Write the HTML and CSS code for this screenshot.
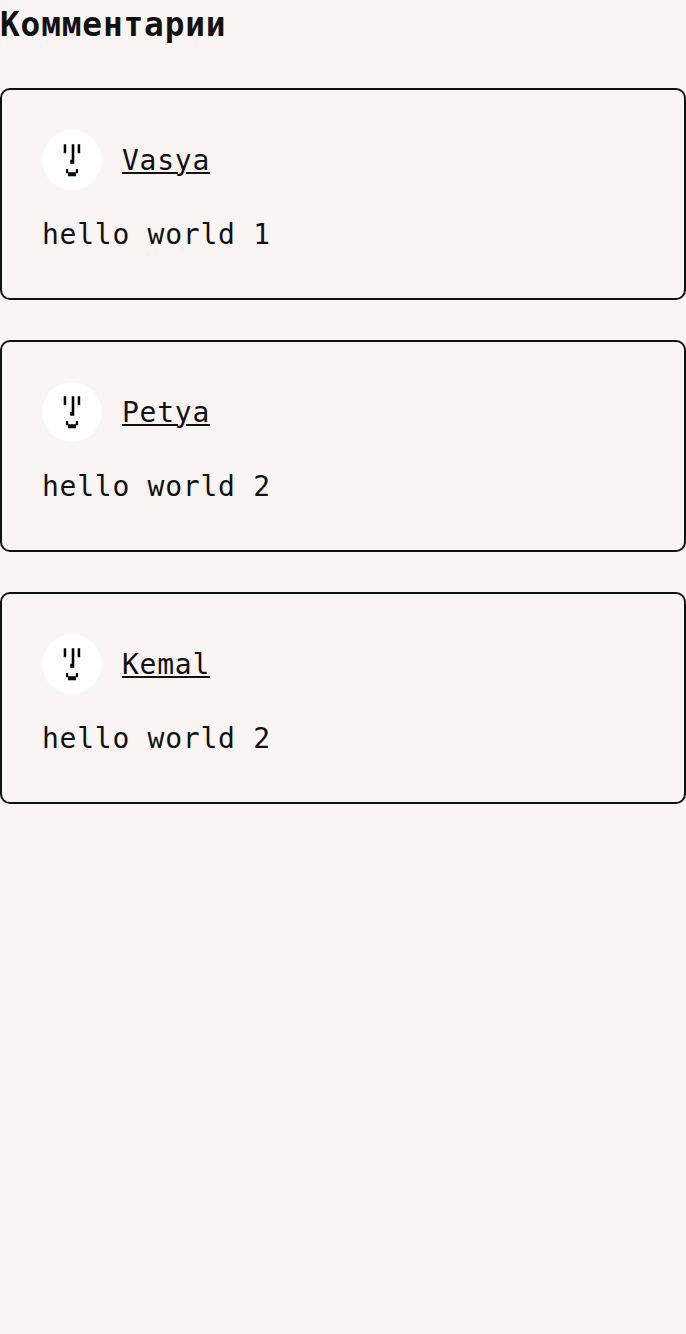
FILE: index.html
```html
<!DOCTYPE html>
<html lang="ru">
<head>
<meta charset="utf-8">
<title>Комментарии</title>
<link rel="stylesheet" href="styles.css">
</head>
<body>
<svg class="sprite" aria-hidden="true">
  <symbol id="face" viewBox="0 0 60 60">
    <path d="M21.7 14.2h2.5v9h-2.5zM35.7 14.2h2.5v9h-2.5zM29.7 14.2h2.6v19.6h-4.1v-4.1h1.5zM24 39h2.2v3.3h7.6V39H36v4.2h-2v3.1h-8v-3.1h-2z"/>
  </symbol>
</svg>
<main class="comments">
  <h2 class="title">Комментарии</h2>
  <article class="comment">
    <header class="author"><span class="avatar"><svg class="face"><use href="#face"/></svg></span><a class="name" href="#">Vasya</a></header>
    <p class="text">hello world 1</p>
  </article>
  <article class="comment">
    <header class="author"><span class="avatar"><svg class="face"><use href="#face"/></svg></span><a class="name" href="#">Petya</a></header>
    <p class="text">hello world 2</p>
  </article>
  <article class="comment">
    <header class="author"><span class="avatar"><svg class="face"><use href="#face"/></svg></span><a class="name" href="#">Kemal</a></header>
    <p class="text">hello world 2</p>
  </article>
</main>
</body>
</html>
```

FILE: styles.css
```css
* { box-sizing: border-box; }
body {
  margin: 0;
  background: #faf4f4;
  color: #111;
  font: 28px/38px Consolas, "DejaVu Sans Mono", monospace;
  letter-spacing: 0.743px;
}
.sprite { display: none; }
.comments { display: flex; flex-direction: column; gap: 40px; }
.title {
  margin: 0;
  height: 48px;
  font-size: 32.8px;
  line-height: 50px;
  letter-spacing: 0.84px;
}
.comment {
  height: 212px;
  padding: 40px;
  border: 2px solid #111;
  border-radius: 10px;
}
.author { display: flex; align-items: center; gap: 20px; }
.avatar { width: 60px; height: 60px; border-radius: 50%; background: #fff; }
.face { display: block; width: 60px; height: 60px; fill: #000; }
.name {
  padding-top: 2px;
  color: inherit;
  text-decoration: underline;
  text-decoration-thickness: 2px;
  text-underline-offset: 2px;
}
.text { margin: 26px 0 0; }
```
